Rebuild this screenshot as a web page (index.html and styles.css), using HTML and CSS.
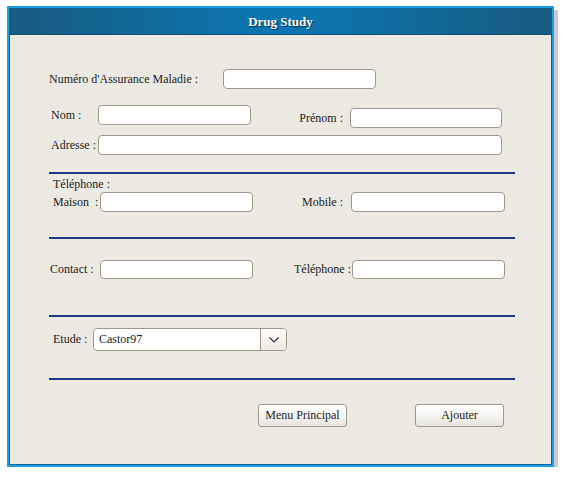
FILE: index.html
```html
<!DOCTYPE html>
<html>
<head>
<meta charset="utf-8">
<link rel="stylesheet" href="styles.css">
</head>
<body>
<div class="window">
  <div class="titlebar">Drug Study</div>
  <div class="content">
    <div class="row r1">
      <span class="lbl w174">Numéro d'Assurance Maladie :</span>
      <span class="field w153"></span>
    </div>
    <div class="row r2">
      <span class="lbl ml2 w47 lh20">Nom :</span>
      <span class="field w153"></span>
      <span class="lbl right w99 pr7 lh20 mt3">Prénom :</span>
      <span class="field w152 mt3"></span>
    </div>
    <div class="row r3">
      <span class="lbl ml2 w47">Adresse :</span>
      <span class="field w404"></span>
    </div>
    <div class="sep s1"></div>
    <div class="lbl tel">Téléphone :</div>
    <div class="row r4">
      <span class="lbl ml4 w47">Maison&nbsp; :</span>
      <span class="field w153"></span>
      <span class="lbl right w98 pr8">Mobile :</span>
      <span class="field w154"></span>
    </div>
    <div class="sep s2"></div>
    <div class="row r5">
      <span class="lbl ml1 w50">Contact :</span>
      <span class="field w153 h19"></span>
      <span class="lbl right w99 pr1">Téléphone :</span>
      <span class="field w153 h19"></span>
    </div>
    <div class="sep s3"></div>
    <div class="row r6">
      <span class="lbl ml4 w40">Etude :</span>
      <span class="select">
        <span class="select-text">Castor97</span>
        <span class="select-btn">
          <svg width="12" height="8" viewBox="0 0 12 8"><path d="M1.5 1.5 L6 6 L10.5 1.5" fill="none" stroke="#333" stroke-width="1.2"/></svg>
        </span>
      </span>
    </div>
    <div class="sep s4"></div>
    <div class="row r7">
      <span class="btn">Menu Principal</span>
      <span class="btn b2">Ajouter</span>
    </div>
  </div>
</div>
</body>
</html>
```
FILE: styles.css
```css
html, body {
  margin: 0;
  padding: 0;
  background: #ffffff;
}
body {
  font-family: "Liberation Serif", "Times New Roman", serif;
  font-size: 12px;
  color: #222;
}
.window {
  margin: 6px 0 0 7px;
  width: 547px;
  height: 461px;
  box-sizing: border-box;
  border: 2px solid #1b9ee4;
  box-shadow: 0 0 0 1px #0c5f98 inset, 4px 4px 0 0 #cbcbcb;
  background: #ece9e3;
  display: flex;
  flex-direction: column;
  position: relative;
}
.titlebar {
  height: 27px;
  line-height: 27px;
  text-align: center;
  color: #ffffff;
  font-weight: bold;
  font-size: 13px;
  text-shadow: 1px 1px 1px #0a2f48;
  background: linear-gradient(to right, #185b80 0%, #0f6c9f 30%, #0b77b3 50%, #0f6c9f 70%, #185b80 100%);
  border-bottom: 1px solid #134f70;
  box-sizing: border-box;
}
.content {
  padding-left: 40px;
  display: flex;
  flex-direction: column;
  align-items: flex-start;
}
.row {
  display: flex;
  align-items: center;
}
.lbl {
  white-space: nowrap;
  flex: none;
}
.right { text-align: right; }
.field {
  display: block;
  flex: none;
  height: 20px;
  box-sizing: border-box;
  background: #ffffff;
  border: 1px solid #a2988a;
  border-radius: 4px;
}
.h19 { height: 19px; }
.w40 { width: 40px; }
.w47 { width: 47px; }
.w50 { width: 50px; }
.w98 { width: 98px; }
.w99 { width: 99px; }
.w152 { width: 152px; }
.w153 { width: 153px; }
.w154 { width: 154px; }
.w174 { width: 174px; }
.w404 { width: 404px; }
.ml1 { margin-left: 1px; }
.ml2 { margin-left: 2px; }
.ml4 { margin-left: 4px; }
.pr1 { padding-right: 1px; box-sizing: border-box; }
.pr7 { padding-right: 7px; box-sizing: border-box; }
.pr8 { padding-right: 8px; box-sizing: border-box; }
.mt3 { margin-top: 3px; }
.lh20 { line-height: 20px; }

.r1 { margin-top: 34px; height: 20px; }
.r2 { margin-top: 16px; height: 23px; align-items: flex-start; }
.r3 { margin-top: 7px; height: 20px; }
.sep {
  width: 466px;
  height: 2px;
  background: #1d3686;
}
.s1 { margin-top: 17px; }
.tel { margin-top: 3px; margin-left: 4px; line-height: 14px; }
.r4 { margin-top: 1px; height: 20px; }
.s2 { margin-top: 25px; }
.r5 { margin-top: 20px; height: 20px; }
.s3 { margin-top: 36px; }
.r6 { margin-top: 11px; height: 23px; }
.select {
  display: flex;
  width: 194px;
  height: 23px;
  box-sizing: border-box;
  border: 1px solid #a2988a;
  border-radius: 4px;
  background: #ffffff;
  overflow: hidden;
}
.select-text {
  flex: 1;
  padding-left: 5px;
  line-height: 21px;
  color: #222;
}
.select-btn {
  width: 25px;
  border-left: 1px solid #a2988a;
  background: linear-gradient(to bottom, #ffffff, #ece9e3);
  display: flex;
  align-items: center;
  justify-content: center;
}
.s4 { margin-top: 27px; }
.r7 { margin-top: 24px; margin-left: 209px; }
.btn {
  display: block;
  width: 89px;
  height: 23px;
  line-height: 21px;
  box-sizing: border-box;
  text-align: center;
  border: 1px solid #a2988a;
  border-radius: 3px;
  background: linear-gradient(to bottom, #ffffff 0%, #f6f5f2 50%, #e6e4de 100%);
  color: #222;
}
.b2 { margin-left: 68px; }
```
